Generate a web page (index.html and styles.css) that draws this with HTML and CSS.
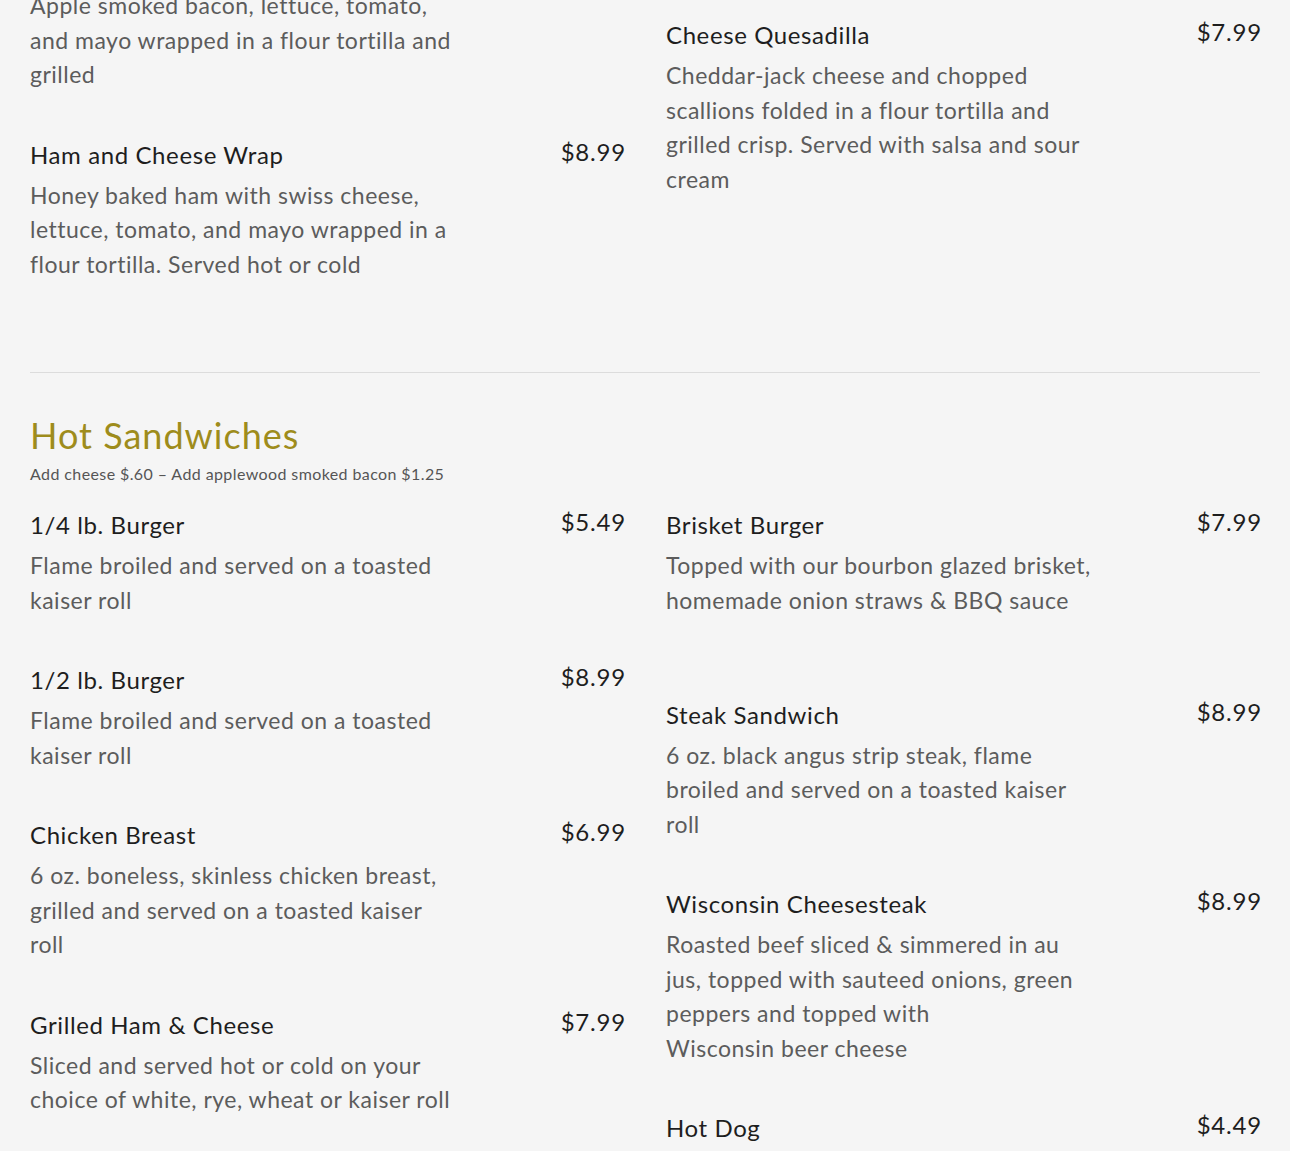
FILE: index.html
```html
<!DOCTYPE html>
<html lang="en">
<head>
<meta charset="utf-8">
<title>Menu</title>
<link rel="stylesheet" href="styles.css">
</head>
<body>
<main class="menu">
  <section class="menu-section first">
    <div class="cols">
      <div class="col">
        <div class="item item-continued">
          <div class="item-body">
            <p class="item-desc">Apple smoked bacon, lettuce, tomato,<br>and mayo wrapped in a flour tortilla and<br>grilled</p>
          </div>
        </div>
        <div class="item">
          <div class="item-body">
            <h3 class="item-name">Ham and Cheese Wrap</h3>
            <p class="item-desc">Honey baked ham with swiss cheese,<br>lettuce, tomato, and mayo wrapped in a<br>flour tortilla. Served hot or cold</p>
          </div>
          <div class="item-price">$8.99</div>
        </div>
      </div>
      <div class="col col-offset">
        <div class="item">
          <div class="item-body">
            <h3 class="item-name">Cheese Quesadilla</h3>
            <p class="item-desc">Cheddar-jack cheese and chopped<br>scallions folded in a flour tortilla and<br>grilled crisp. Served with salsa and sour<br>cream</p>
          </div>
          <div class="item-price">$7.99</div>
        </div>
      </div>
    </div>
  </section>

  <section class="menu-section">
    <h2 class="section-title">Hot Sandwiches</h2>
    <p class="section-note">Add cheese $.60 – Add applewood smoked bacon $1.25</p>
    <div class="cols">
      <div class="col">
        <div class="item">
          <div class="item-body">
            <h3 class="item-name">1/4 lb. Burger</h3>
            <p class="item-desc">Flame broiled and served on a toasted<br>kaiser roll</p>
          </div>
          <div class="item-price">$5.49</div>
        </div>
        <div class="item">
          <div class="item-body">
            <h3 class="item-name">1/2 lb. Burger</h3>
            <p class="item-desc">Flame broiled and served on a toasted<br>kaiser roll</p>
          </div>
          <div class="item-price">$8.99</div>
        </div>
        <div class="item">
          <div class="item-body">
            <h3 class="item-name">Chicken Breast</h3>
            <p class="item-desc">6 oz. boneless, skinless chicken breast,<br>grilled and served on a toasted kaiser<br>roll</p>
          </div>
          <div class="item-price">$6.99</div>
        </div>
        <div class="item">
          <div class="item-body">
            <h3 class="item-name">Grilled Ham &amp; Cheese</h3>
            <p class="item-desc">Sliced and served hot or cold on your<br>choice of white, rye, wheat or kaiser roll</p>
          </div>
          <div class="item-price">$7.99</div>
        </div>
      </div>
      <div class="col">
        <div class="item">
          <div class="item-body">
            <h3 class="item-name">Brisket Burger</h3>
            <p class="item-desc">Topped with our bourbon glazed brisket,<br>homemade onion straws &amp; BBQ sauce<br>&nbsp;</p>
          </div>
          <div class="item-price">$7.99</div>
        </div>
        <div class="item">
          <div class="item-body">
            <h3 class="item-name">Steak Sandwich</h3>
            <p class="item-desc">6 oz. black angus strip steak, flame<br>broiled and served on a toasted kaiser<br>roll</p>
          </div>
          <div class="item-price">$8.99</div>
        </div>
        <div class="item">
          <div class="item-body">
            <h3 class="item-name">Wisconsin Cheesesteak</h3>
            <p class="item-desc">Roasted beef sliced &amp; simmered in au<br>jus, topped with sauteed onions, green<br>peppers and topped with<br>Wisconsin beer cheese</p>
          </div>
          <div class="item-price">$8.99</div>
        </div>
        <div class="item">
          <div class="item-body">
            <h3 class="item-name">Hot Dog</h3>
          </div>
          <div class="item-price">$4.49</div>
        </div>
      </div>
    </div>
  </section>
</main>
</body>
</html>
```

FILE: styles.css
```css
* { box-sizing: border-box; }
html, body {
  margin: 0;
  padding: 0;
  background: #f5f5f5;
}
body {
  font-family: Lato, "Open Sans", sans-serif;
  color: #1e1e1e;
  overflow: hidden;
  height: 1151px;
}
.menu {
  width: 1290px;
  padding: 0 30px;
}
.menu-section {
  padding: 41px 0 0;
}
.menu-section.first {
  padding: 0 0 46px;
  border-bottom: 1px solid #dcdcdc;
}
.cols {
  display: grid;
  grid-template-columns: 594px 594px;
  column-gap: 42px;
}
.col-offset {
  padding-top: 17px;
}
.item {
  display: flex;
  justify-content: space-between;
  align-items: flex-start;
  margin-bottom: 45px;
}
.item-continued .item-desc {
  margin-top: -12px;
}
.item-body {
  width: 445px;
}
.item-name {
  margin: 0;
  font-size: 24px;
  line-height: 36px;
  font-weight: 400;
  letter-spacing: 0.6px;
  color: #1e1e1e;
}
.item-desc {
  margin: 5px 0 0;
  font-size: 23px;
  line-height: 34.5px;
  letter-spacing: 0.5px;
  color: #5c5c5c;
  white-space: nowrap;
}
.item-price {
  font-size: 24px;
  line-height: 36px;
  letter-spacing: 0.8px;
  margin-top: -3px;
  margin-right: -2px;
  color: #1e1e1e;
}
.section-title {
  margin: 0;
  font-size: 36px;
  line-height: 43px;
  font-weight: 400;
  letter-spacing: 1px;
  color: #9e8c1c;
}
.section-note {
  margin: 5px 0 21px;
  font-size: 16px;
  line-height: 24px;
  letter-spacing: 0.4px;
  color: #555;
}
```
